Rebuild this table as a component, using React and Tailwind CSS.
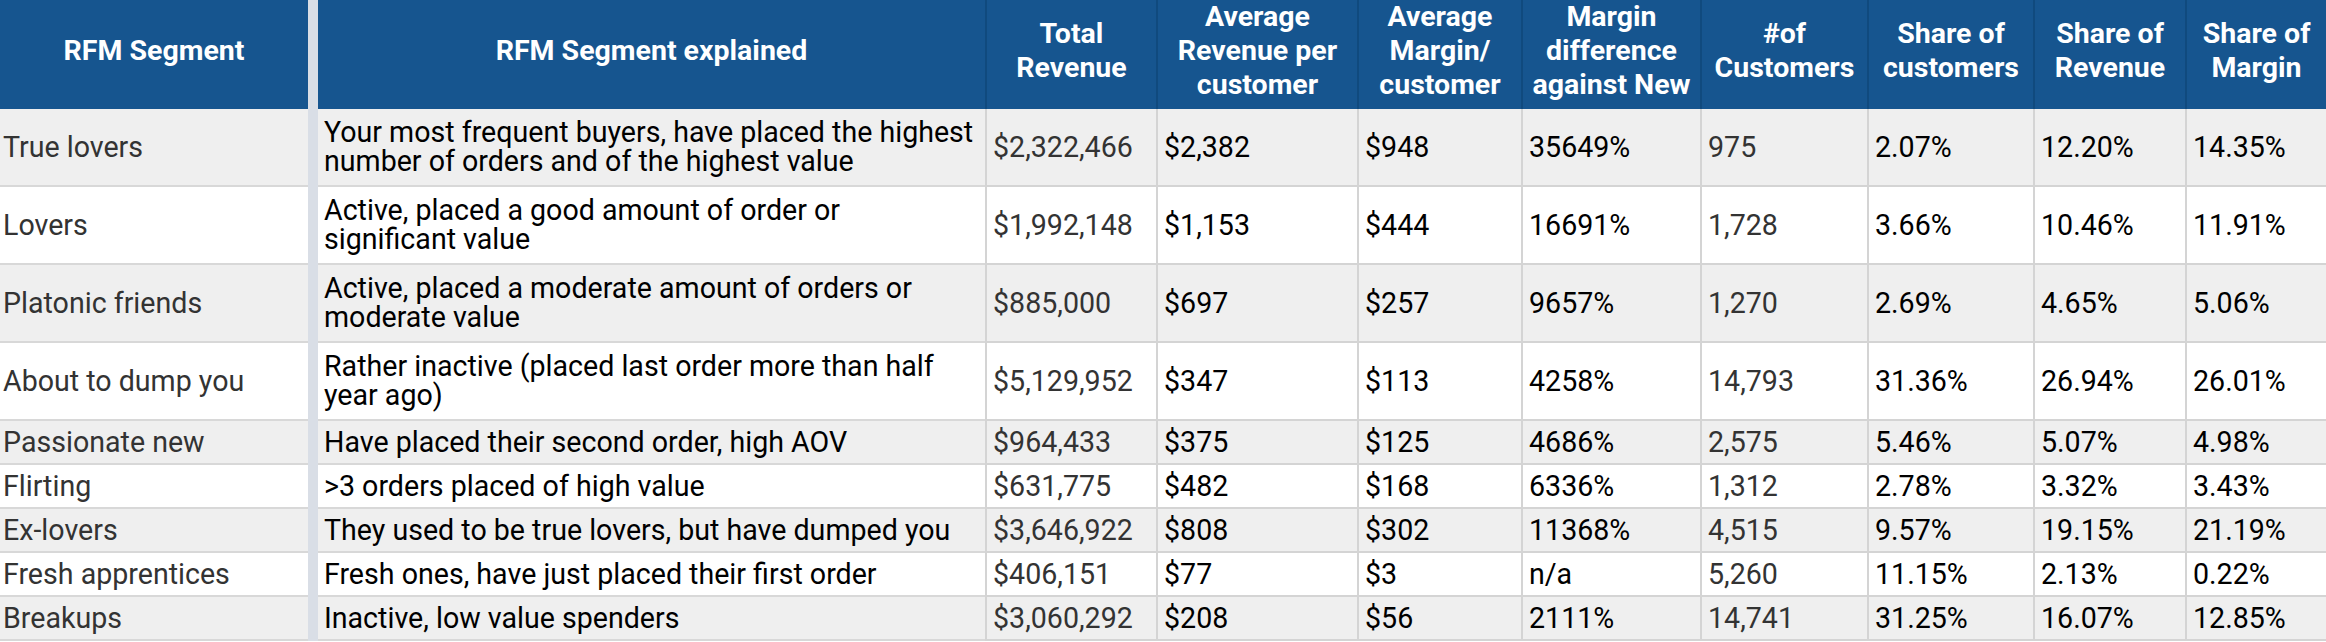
const cols =
  'grid grid-cols-[308px_10px_667px_171px_201px_164px_179px_167px_166px_152px_141px]';

const headers = [
  ['RFM Segment'],
  ['RFM Segment explained'],
  ['Total', 'Revenue'],
  ['Average', 'Revenue per', 'customer'],
  ['Average', 'Margin/', 'customer'],
  ['Margin', 'difference', 'against New'],
  ['#of', 'Customers'],
  ['Share of', 'customers'],
  ['Share of', 'Revenue'],
  ['Share of', 'Margin'],
];

const rows = [
  ['True lovers', ['Your most frequent buyers, have placed the highest', 'number of orders and of the highest value'], '$2,322,466', '$2,382', '$948', '35649%', '975', '2.07%', '12.20%', '14.35%'],
  ['Lovers', ['Active, placed a good amount of order or', 'significant value'], '$1,992,148', '$1,153', '$444', '16691%', '1,728', '3.66%', '10.46%', '11.91%'],
  ['Platonic friends', ['Active, placed a moderate amount of orders or', 'moderate value'], '$885,000', '$697', '$257', '9657%', '1,270', '2.69%', '4.65%', '5.06%'],
  ['About to dump you', ['Rather inactive (placed last order more than half', 'year ago)'], '$5,129,952', '$347', '$113', '4258%', '14,793', '31.36%', '26.94%', '26.01%'],
  ['Passionate new', ['Have placed their second order, high AOV'], '$964,433', '$375', '$125', '4686%', '2,575', '5.46%', '5.07%', '4.98%'],
  ['Flirting', ['>3 orders placed of high value'], '$631,775', '$482', '$168', '6336%', '1,312', '2.78%', '3.32%', '3.43%'],
  ['Ex-lovers', ['They used to be true lovers, but have dumped you'], '$3,646,922', '$808', '$302', '11368%', '4,515', '9.57%', '19.15%', '21.19%'],
  ['Fresh apprentices', ['Fresh ones, have just placed their first order'], '$406,151', '$77', '$3', 'n/a', '5,260', '11.15%', '2.13%', '0.22%'],
  ['Breakups', ['Inactive, low value spenders'], '$3,060,292', '$208', '$56', '2111%', '14,741', '31.25%', '16.07%', '12.85%'],
];

// columns shown in dark grey instead of black
const greyCols = [2, 6];

const Lines = ({ lines }) => (
  <div className="whitespace-nowrap">
    {lines.map((l, j) => (
      <span key={j}>
        {j > 0 && <br />}
        {l}
      </span>
    ))}
  </div>
);

const HeaderRow = () => (
  <div className={`${cols} h-[100px]`}>
    {headers.map((lines, i) => (
      <>
        {i === 1 && <div key="div" className="bg-[#d9dee6]" />}
        <div
          key={i}
          className={`flex items-center justify-center pb-[10px] bg-[#16558f] border-b-2 text-center text-white font-bold text-[28.5px] leading-[34px] ${
            i === 6 ? 'border-[#e4e9ef]' : 'border-[#0f4676]'
          } ${i > 1 ? 'border-l-2 border-l-[#104a7e]' : ''}`}
        >
          <Lines lines={lines} />
        </div>
      </>
    ))}
  </div>
);

const BodyRow = ({ row, idx }) => {
  const bg = idx % 2 === 0 ? 'bg-[#efefef]' : 'bg-white';
  const tall = row[1].length > 1;
  return (
    <div className={`${cols} ${tall ? 'h-[78px]' : 'h-[44px]'}`}>
      <div className={`${bg} border-b-2 border-[#d8d8d8] flex items-center pl-[3px] text-[#333]`}>
        {row[0]}
      </div>
      <div className="bg-[#d9dee6]" />
      <div className={`${bg} border-b-2 border-[#d8d8d8] flex items-center pl-[6px] text-black`}>
        <Lines lines={row[1]} />
      </div>
      {row.slice(2).map((v, j) => (
        <div
          key={j}
          className={`${bg} border-b-2 border-l-2 border-[#d4d4d4] flex items-center pl-[6px] ${
            greyCols.includes(j + 2) ? 'text-[#333]' : 'text-black'
          }`}
        >
          {v}
        </div>
      ))}
    </div>
  );
};

const App = () => {
  return (
    <div className="w-[2326px] h-[642px] overflow-hidden bg-white font-['Roboto',sans-serif] text-[28.6px] leading-[29px]">
      <HeaderRow />
      <div className="h-[9px] bg-[#d9dee6]" />
      {rows.map((r, i) => (
        <BodyRow key={i} row={r} idx={i} />
      ))}
    </div>
  );
};

export default App;
